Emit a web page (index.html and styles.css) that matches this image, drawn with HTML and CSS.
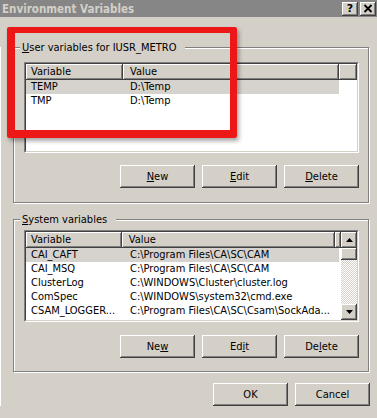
FILE: index.html
```html
<!DOCTYPE html>
<html lang="en">
<head>
  <meta charset="UTF-8">
  <title>Environment Variables</title>
  <link rel="stylesheet" href="styles.css">
</head>
<body>

  <div class="window">

    <!-- Title bar -->
    <div class="titlebar">
      <span class="title">Environment Variables</span>
      <div class="caption-buttons">
        <span class="caption-btn raised">?</span>
        <span class="caption-btn raised">
          <svg width="10" height="9" viewBox="0 0 10 9"><path d="M1.5 1 L8.5 8 M8.5 1 L1.5 8" stroke="#000" stroke-width="1.8"/></svg>
        </span>
      </div>
    </div>

    <div class="client">

      <!-- User variables -->
      <div class="group group-user">
        <div class="group-label"><u>U</u>ser variables for IUSR_METRO</div>
        <div class="listview list-user">
          <div class="lv-inner">
            <div class="lv-body">
              <div class="lv-header">
                <span class="hd hd-name">Variable</span>
                <span class="hd hd-value">Value</span>
                <span class="hd hd-fill"></span>
              </div>
              <div class="lv-row selected"><span class="c-name">TEMP</span><span class="c-value">D:\Temp</span></div>
              <div class="lv-row"><span class="c-name">TMP</span><span class="c-value">D:\Temp</span></div>
            </div>
          </div>
        </div>
        <div class="btn-row">
          <button class="btn raised"><u>N</u>ew</button>
          <button class="btn raised"><u>E</u>dit</button>
          <button class="btn raised"><u>D</u>elete</button>
        </div>
      </div>

      <!-- System variables -->
      <div class="group group-system">
        <div class="group-label"><u>S</u>ystem variables</div>
        <div class="listview list-system">
          <div class="lv-inner">
            <div class="lv-body">
              <div class="lv-header">
                <span class="hd hd-name">Variable</span>
                <span class="hd hd-value">Value</span>
                <span class="hd hd-fill"></span>
              </div>
              <div class="lv-row selected"><span class="c-name">CAI_CAFT</span><span class="c-value">C:\Program Files\CA\SC\CAM</span></div>
              <div class="lv-row"><span class="c-name">CAI_MSQ</span><span class="c-value">C:\Program Files\CA\SC\CAM</span></div>
              <div class="lv-row"><span class="c-name">ClusterLog</span><span class="c-value">C:\WINDOWS\Cluster\cluster.log</span></div>
              <div class="lv-row"><span class="c-name">ComSpec</span><span class="c-value">C:\WINDOWS\system32\cmd.exe</span></div>
              <div class="lv-row"><span class="c-name">CSAM_LOGGER...</span><span class="c-value">C:\Program Files\CA\SC\Csam\SockAda...</span></div>
              <div class="lv-row"><span class="c-name">CSAM_SOCKA...</span><span class="c-value">C:\Program Files\CA\SC\Csam\SockAda...</span></div>
            </div>
            <div class="scrollbar">
              <span class="sb-btn raised">
                <svg width="7" height="4" viewBox="0 0 7 4"><path d="M3.5 0 L7 4 L0 4 Z" fill="#000"/></svg>
              </span>
              <span class="sb-thumb raised"></span>
              <span class="sb-track"></span>
              <span class="sb-btn raised">
                <svg width="7" height="4" viewBox="0 0 7 4"><path d="M0 0 L7 0 L3.5 4 Z" fill="#000"/></svg>
              </span>
            </div>
          </div>
        </div>
        <div class="btn-row">
          <button class="btn raised">Ne<u>w</u></button>
          <button class="btn raised">Ed<u>i</u>t</button>
          <button class="btn raised">De<u>l</u>ete</button>
        </div>
      </div>

      <!-- Dialog buttons -->
      <div class="dialog-buttons">
        <button class="btn raised">OK</button>
        <button class="btn raised">Cancel</button>
      </div>

    </div>

    <!-- Red callout drawn over the screenshot -->
    <div class="callout"></div>
  </div>

</body>
</html>
```

FILE: styles.css
```css
/* Global Styles */
body {
  margin: 0;
  background-color: #d4d0c8;
  font-family: "DejaVu Sans Condensed", "DejaVu Sans", "Liberation Sans", sans-serif;
  font-size: 11px;
  color: #000;
}

.window {
  position: relative;
  width: 377px;
  height: 418px;
  background-color: #d4d0c8;
  overflow: hidden;
}

/* Shared 3D look */
.raised {
  background-color: #d4d0c8;
  box-shadow: inset -1px -1px 0 #404040, inset 1px 1px 0 #fff,
              inset -2px -2px 0 #808080, inset 2px 2px 0 #d4d0c8;
}

/* Title bar */
.titlebar {
  height: 17px;
  background-color: #868686;
  color: #d4d0c8;
  display: flex;
  align-items: center;
  justify-content: space-between;
  padding: 0 1px 0 2px;
  font-weight: bold;
}

.title {
  font-size: 11.5px;
}

.caption-buttons {
  display: flex;
  gap: 2px;
}

.caption-btn {
  width: 16px;
  height: 14px;
  display: flex;
  align-items: center;
  justify-content: center;
  color: #000;
  font-family: "DejaVu Sans", sans-serif;
  font-size: 11px;
  font-weight: bold;
}

/* Client area */
.client {
  padding: 0 8px 0 13px;
  box-shadow: inset 1px 0 0 #fff;
}

.group {
  border: 1px solid #808080;
  box-shadow: 1px 1px 0 #fff, inset 1px 1px 0 #fff;
  padding: 0 9px 13px 10px;
}

.group-user {
  margin-top: 30px;
  padding-bottom: 14px;
}

.group-system {
  margin-top: 16px;
}

.group-label {
  width: fit-content;
  height: 13px;
  line-height: 13px;
  margin: -7px 0 0 -4px;
  padding: 0 9px 0 2px;
  background-color: #d4d0c8;
}

/* List view */
.listview {
  border: 1px solid;
  border-color: #808080 #fff #fff #808080;
}

.list-user {
  margin-top: 8px;
  height: 91px;
  box-sizing: border-box;
}

.list-system {
  margin-top: 4px;
  height: 92px;
  box-sizing: border-box;
}

.lv-inner {
  height: 100%;
  box-sizing: border-box;
  border: 1px solid;
  border-color: #404040 #d4d0c8 #d4d0c8 #404040;
  background-color: #fff;
  display: flex;
}

.lv-body {
  flex: 1;
  overflow: hidden;
}

.lv-header {
  display: flex;
  height: 16px;
}

.hd {
  box-sizing: border-box;
  height: 16px;
  line-height: 15px;
  padding-left: 5px;
  background-color: #d4d0c8;
  border-right: 1px solid #404040;
  border-bottom: 1px solid #404040;
  box-shadow: inset 1px 1px 0 #fff, inset -1px -1px 0 #808080;
}

.hd-name {
  width: 97px;
}

.hd-value {
  width: 216px;
  padding-left: 7px;
}

.hd-fill {
  flex: 1;
}

.lv-row {
  display: flex;
  width: 313px;
  height: 14px;
  line-height: 14px;
  white-space: nowrap;
}

.lv-row.selected {
  background-color: #d6d3ce;
}

.c-name {
  width: 97px;
  padding-left: 5px;
  box-sizing: border-box;
  overflow: hidden;
}

.c-value {
  flex: 1;
  padding-left: 7px;
  overflow: hidden;
}

/* Scrollbar */
.scrollbar {
  width: 16px;
  display: flex;
  flex-direction: column;
  background-color: #d4d0c8;
  background-image: conic-gradient(#fff 25%, #d4d0c8 0 50%, #fff 0 75%, #d4d0c8 0);
  background-size: 2px 2px;
}

.sb-btn {
  height: 16px;
  display: flex;
  align-items: center;
  justify-content: center;
}

.sb-thumb {
  height: 12px;
}

.sb-track {
  flex: 1;
}

/* Buttons */
.btn {
  width: 75px;
  height: 23px;
  box-sizing: border-box;
  border: none;
  padding: 0;
  font: inherit;
  color: #000;
}

.btn-row {
  margin-top: 12px;
  display: flex;
  justify-content: flex-end;
  gap: 7px;
}

.group-system .btn-row {
  margin-top: 13px;
}

.dialog-buttons {
  margin: 11px -1px 0 0;
  display: flex;
  justify-content: flex-end;
  gap: 7px;
}

/* Red highlight box */
.callout {
  position: absolute;
  left: 7px;
  top: 27px;
  width: 230px;
  height: 111px;
  box-sizing: border-box;
  border-style: solid;
  border-color: #ee1717;
  border-width: 6px 7px 8px 8px;
  border-radius: 2px;
  box-shadow: 2px 3px 4px rgba(0, 0, 0, 0.35);
}
```
